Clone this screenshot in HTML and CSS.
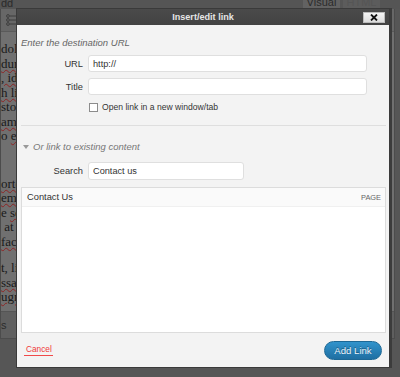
FILE: index.html
```html
<!DOCTYPE html>
<html lang="en">
<head>
  <meta charset="UTF-8" />
  <title>Insert/edit link</title>
  <link rel="stylesheet" href="styles.css">
</head>
<body>

  <!-- Editor behind the overlay -->
  <div class="backdrop">
    <div class="topbar">
      <span class="crumb">dd</span>
      <div class="tabs">
        <span class="tab active">Visual</span>
        <span class="tab">HTML</span>
      </div>
    </div>
    <div class="editor">
      <div class="toolbar">
        <svg class="list-icon" width="10" height="12" viewBox="0 0 10 12">
          <circle cx="2" cy="2" r="1.4" fill="none" stroke="#333" stroke-width="0.8"/>
          <circle cx="2" cy="6" r="1.4" fill="none" stroke="#333" stroke-width="0.8"/>
          <circle cx="2" cy="10" r="1.4" fill="none" stroke="#333" stroke-width="0.8"/>
          <path d="M4 2H10M4 6H10M4 10H10" stroke="#333" stroke-width="0.8"/>
        </svg>
      </div>
      <div class="content">
        <p class="first">
          <span class="line">dolor sit amet, consectetur</span>
          <span class="line"><u>dum</u> vitae sapien</span>
          <span class="line"><u>, id</u> pharetra massa</span>
          <span class="line"><u>h li</u>gula eget</span>
          <span class="line">sto nunc</span>
          <span class="line"><u>am</u> ultricies</span>
          <span class="line">o <u>ele</u>ifend</span>
        </p>
        <p>
          <span class="line"><u>orto</u>r quis</span>
          <span class="line"><u>em t</u>empus</span>
          <span class="line">e <u>se</u>mper</span>
          <span class="line">&nbsp;at ipsum</span>
          <span class="line"><u>faci</u>lisis</span>
        </p>
        <p>
          <span class="line">t, li bero</span>
          <span class="line"><u>ssa</u> quis</span>
          <span class="line"><u>ugna</u> nunc</span>
        </p>
      </div>
      <div class="status">s</div>
    </div>
  </div>

  <!-- Link dialog -->
  <div class="dialog">
    <div class="dialog-title">
      Insert/edit link
      <button class="close">
        <svg width="8" height="7" viewBox="0 0 8 7">
          <path d="M1 0.5L7 6.5M7 0.5L1 6.5" stroke="#111" stroke-width="1.8"/>
        </svg>
      </button>
    </div>

    <div class="dialog-body">
      <p class="hint">Enter the destination URL</p>
      <div class="field">
        <label>URL</label>
        <input type="text" value="http://">
      </div>
      <div class="field">
        <label>Title</label>
        <input type="text" value="">
      </div>
      <div class="check">
        <span class="box"></span>
        <span>Open link in a new window/tab</span>
      </div>

      <div class="sep"></div>

      <p class="hint toggle"><span class="arrow"></span>Or link to existing content</p>
      <div class="field search">
        <label>Search</label>
        <input type="text" value="Contact us">
      </div>

      <div class="results">
        <div class="result-row">
          <span>Contact Us</span>
          <span class="kind">PAGE</span>
        </div>
      </div>
    </div>

    <div class="dialog-foot">
      <a class="cancel" href="#">Cancel</a>
      <button class="submit">Add Link</button>
    </div>
  </div>

</body>
</html>
```

FILE: styles.css
```css
body {
  margin: 0;
  width: 400px;
  height: 377px;
  overflow: hidden;
  position: relative;
  background: #565656;
  font-family: "Liberation Sans", Arial, sans-serif;
}

/* ---------- backdrop ---------- */

.backdrop {
  height: 100%;
}

.topbar {
  height: 9px;
  display: flex;
  justify-content: space-between;
  overflow: hidden;
  background: #555;
}

.crumb {
  font-size: 11px;
  line-height: 6px;
  color: #2a2a2a;
  padding-left: 1px;
}

.tabs {
  display: flex;
  gap: 3px;
  margin-right: 20px;
}

.tab {
  width: 37px;
  height: 9px;
  font-size: 11px;
  line-height: 5px;
  text-align: center;
  color: #555;
  background: #5c5c5c;
}

.tab.active {
  color: #2b2b2b;
  background: #626262;
}

.editor {
  margin-right: 5px;
  border: 1px solid #4c4c4c;
  border-top: 0;
}

.toolbar {
  height: 22px;
  background: #676767;
  border-bottom: 1px solid #5a5a5a;
  display: flex;
  align-items: center;
  padding-left: 5px;
}

.content {
  background: #707070;
  padding: 10px 0 6px 0;
  font-family: "Liberation Serif", "Times New Roman", serif;
  font-size: 13px;
  line-height: 14.5px;
  color: #1a1a1a;
}

.content p {
  margin: 0 0 12px 0;
}

.content p.first {
  margin-bottom: 33px;
}

.content p:last-child {
  margin-bottom: 0;
}

.line {
  display: block;
  white-space: nowrap;
}

.content u {
  text-decoration: underline wavy #8e2424;
  text-decoration-thickness: 1px;
}

.status {
  height: 26px;
  background: #5f5f5f;
  border-top: 1px solid #555;
  font-size: 11px;
  line-height: 26px;
  color: #2c2c2c;
}

/* ---------- dialog ---------- */

.dialog {
  position: absolute;
  left: 16px;
  top: 8px;
  width: 374px;
  height: 360px;
  box-sizing: border-box;
  border: 1px solid #3a3a3a;
  box-shadow: 2px 0 0 #3c3c3c;
  background: #f3f3f3;
  display: flex;
  flex-direction: column;
}

.dialog-title {
  position: relative;
  height: 16px;
  background: linear-gradient(#4a4a4a, #424242);
  color: #e6e6e6;
  font-size: 9.1px;
  font-weight: bold;
  line-height: 16px;
  text-align: center;
}

.close {
  position: absolute;
  right: 4px;
  top: 3px;
  width: 22px;
  height: 11px;
  padding: 0;
  border: 1px solid #bbb;
  background: linear-gradient(#f4f4f4, #dcdcdc);
  display: flex;
  align-items: center;
  justify-content: center;
}

.dialog-body {
  flex: 1;
  padding: 12px 3px 0 4px;
  font-size: 9.3px;
  color: #333;
}

.hint {
  margin: 0;
  font-size: 9.5px;
  line-height: 12px;
  font-style: italic;
  color: #666;
}

.field {
  display: flex;
  align-items: center;
  gap: 5px;
  margin-top: 6px;
}

.field label {
  width: 62px;
  text-align: right;
  font-size: 9.3px;
  color: #333;
}

.field input {
  width: 279px;
  height: 17px;
  box-sizing: border-box;
  margin: 0;
  padding: 0 4px;
  border: 1px solid #dfdfdf;
  border-radius: 3px;
  background: #fff;
  font-family: "Liberation Sans", Arial, sans-serif;
  font-size: 9.2px;
  color: #333;
}

.field.search {
  margin-top: 9px;
}

.field.search input {
  width: 156px;
  height: 18px;
}

.check {
  display: flex;
  align-items: center;
  gap: 4px;
  margin: 7px 0 0 68px;
  font-size: 8.6px;
  color: #333;
}

.box {
  width: 7px;
  height: 7px;
  border: 1px solid #8c8c8c;
  background: #fff;
}

.sep {
  height: 1px;
  background: #dedede;
  margin: 13px 0 15px 0;
}

.toggle {
  display: flex;
  align-items: center;
  padding-left: 2px;
  color: #777;
}

.arrow {
  width: 0;
  height: 0;
  border-left: 3px solid transparent;
  border-right: 3px solid transparent;
  border-top: 4px solid #999;
  margin-right: 4px;
}

.results {
  margin-top: 7px;
  height: 146px;
  box-sizing: border-box;
  border: 1px solid #dcdcdc;
  background: #fff;
}

.result-row {
  height: 18px;
  display: flex;
  justify-content: space-between;
  align-items: center;
  padding: 0 4px 0 5px;
  background: #fafafa;
  border-bottom: 1px solid #f0f0f0;
  font-size: 9.3px;
  color: #333;
}

.kind {
  font-size: 7.4px;
  color: #666;
}

.dialog-foot {
  height: 34px;
  display: flex;
  justify-content: space-between;
  align-items: center;
  padding: 0 7px;
}

.cancel {
  font-size: 8.3px;
  color: #f03a3a;
  text-decoration: none;
  padding: 0 1px 1px 2px;
  border-bottom: 1px solid #f04a4a;
}

.submit {
  width: 58px;
  height: 19px;
  padding: 0;
  border: 1px solid #1d6895;
  border-radius: 10px;
  background: linear-gradient(#3193cc, #1f6fa2);
  color: #e9f3fa;
  font-family: "Liberation Sans", Arial, sans-serif;
  font-size: 9.6px;
  text-shadow: 0 -1px 0 #1a5b82;
}
```
